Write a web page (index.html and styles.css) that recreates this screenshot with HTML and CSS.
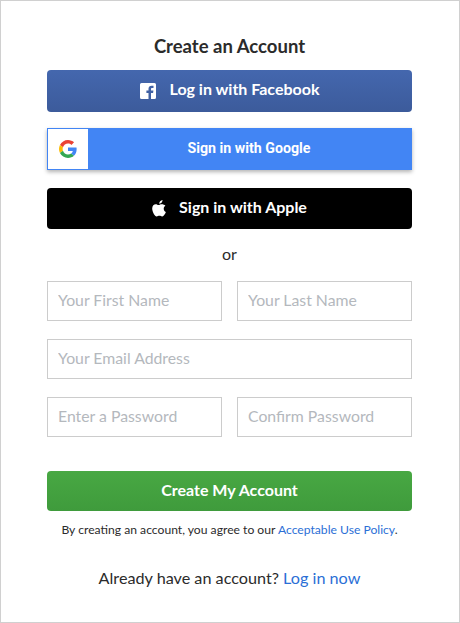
FILE: index.html
```html
<!DOCTYPE html>
<html>
  <head>
    <title>Create an Account</title>
    <link rel="stylesheet" href="styles.css">
  </head>
  <body>
    <div class="panel">
      <h1 class="title">Create an Account</h1>

      <button class="socialButton facebookButton">
        <svg class="facebookIcon" viewBox="0 0 16 16" width="16" height="16">
          <path fill="#fff" d="M1.5 0h13A1.5 1.5 0 0 1 16 1.5v13a1.5 1.5 0 0 1-1.500 1.500H11V10h2.100l.3-2.400H11V6.100c0-.7.2-1.100 1.200-1.100h1.300V2.800c-.3 0-1-.1-1.900-.1-1.900 0-3.100 1.100-3.100 3.200v1.700H6.400V10h2.100v6h-7A1.500 1.500 0 0 1 0 14.500v-13A1.500 1.500 0 0 1 1.500 0z"/>
        </svg>
        Log in with Facebook
      </button>

      <button class="googleButton">
        <span class="googleIconBox">
          <svg viewBox="0 0 48 48" width="18" height="18">
            <path fill="#EA4335" d="M24 9.500c3.500 0 6.700 1.200 9.200 3.600l6.900-6.900C35.900 2.400 30.500 0 24 0 14.600 0 6.500 5.400 2.600 13.200l8 6.200C12.500 13.700 17.800 9.500 24 9.500z"/>
            <path fill="#4285F4" d="M47 24.500c0-1.600-.1-3.100-.4-4.500H24v9h12.900c-.6 3-2.200 5.500-4.700 7.200l7.700 6C44.400 38 47 31.900 47 24.500z"/>
            <path fill="#FBBC05" d="M10.500 28.600c-.5-1.400-.8-3-.8-4.600s.3-3.200.8-4.600l-8-6.200C1 16.500 0 20.100 0 24s1 7.500 2.600 10.800l7.900-6.200z"/>
            <path fill="#34A853" d="M24 48c6.500 0 11.900-2.100 15.900-5.800l-7.700-6c-2.200 1.500-4.900 2.300-8.200 2.300-6.200 0-11.500-4.200-13.400-9.900l-8 6.200C6.500 42.600 14.600 48 24 48z"/>
          </svg>
        </span>
        <span class="googleLabel">Sign in with Google</span>
      </button>

      <button class="socialButton appleButton">
        <svg class="appleIcon" viewBox="0 0 16 18" width="15" height="17">
          <path fill="#fff" d="M11.200 0c.1 1-.3 2-.9 2.700-.6.800-1.600 1.300-2.500 1.200-.1-1 .4-2 .9-2.600C9.300.6 10.400.1 11.200 0zM14.300 6.100c-1.100.7-1.800 1.800-1.800 3.100 0 1.500.9 2.800 2.300 3.400-.3.900-.7 1.700-1.200 2.500-.8 1.100-1.600 2.300-2.800 2.300s-1.500-.7-2.900-.7-1.800.7-2.900.7c-1.200 0-2.100-1.200-2.900-2.400C1 13.100.2 10.800.2 9.100c0-3 1.900-4.600 3.800-4.600 1.200 0 2.200.8 3 .8.700 0 1.800-.8 3.200-.8 1.700 0 3.100.6 4.100 1.600z"/>
        </svg>
        Sign in with Apple
      </button>

      <p class="orText">or</p>

      <div class="fieldRow">
        <input class="textBox" placeholder="Your First Name">
        <input class="textBox" placeholder="Your Last Name">
      </div>
      <div class="fieldRow">
        <input class="textBox" placeholder="Your Email Address">
      </div>
      <div class="fieldRow">
        <input class="textBox" placeholder="Enter a Password">
        <input class="textBox" placeholder="Confirm Password">
      </div>

      <button class="createButton">Create My Account</button>

      <p class="policyText">By creating an account, you agree to our <a href="#">Acceptable Use Policy</a>.</p>

      <p class="loginText">Already have an account? <a href="#">Log in now</a></p>
    </div>
  </body>
</html>
```

FILE: styles.css
```css
html, body{
  margin: 0;
  height: 100%;
}

body{
  font-family: Lato, "Open Sans", Arial, sans-serif;
  color: #2b2b2b;
  background-color: white;
}

.panel{
  box-sizing: border-box;
  width: 460px;
  height: 623px;
  padding: 35px 47px 0 46px;
  border: 1px solid #d0d0d0;
}

.title{
  margin: 0 0 14px 0;
  font-size: 18.5px;
  line-height: 20px;
  font-weight: bold;
  text-align: center;
  color: #2b2b2b;
}

button{
  display: flex;
  align-items: center;
  justify-content: center;
  width: 100%;
  border: none;
  padding: 0;
  color: white;
  font-family: inherit;
  font-size: 16px;
  font-weight: bold;
  cursor: pointer;
}

.socialButton{
  border-radius: 4px;
}

.facebookButton{
  height: 42px;
  margin-bottom: 16px;
  padding-bottom: 6px;
  background: linear-gradient(#4467ae, #3c5b9b);
}

.facebookIcon{
  margin-top: 6px;
  margin-right: 14px;
}

.googleButton{
  height: 42px;
  margin-bottom: 18px;
  background-color: #4285f4;
  box-shadow: 0 2px 4px rgba(0, 0, 0, 0.3);
}

.googleIconBox{
  display: flex;
  align-items: center;
  justify-content: center;
  box-sizing: border-box;
  width: 40px;
  height: 40px;
  margin-left: 1px;
  background-color: white;
}

.googleLabel{
  flex: 1;
  padding-right: 2px;
  padding-bottom: 2px;
  font-family: Roboto, Arial, sans-serif;
  font-size: 14.2px;
  font-weight: bold;
  text-align: center;
}

.appleButton{
  height: 41px;
  padding-bottom: 4px;
  background-color: black;
}

.appleIcon{
  margin-top: 4px;
  margin-right: 12px;
}

.orText{
  margin: 15px 0 17px 0;
  font-size: 16px;
  line-height: 20px;
  text-align: center;
}

.fieldRow{
  display: flex;
  gap: 15px;
  margin-bottom: 18px;
}

.textBox{
  flex: 1;
  min-width: 0;
  box-sizing: border-box;
  height: 40px;
  padding: 0 10px 4px 10px;
  border: 1px solid #cccccc;
  font-family: inherit;
  font-size: 15.8px;
}

.textBox::placeholder{
  color: #b4b8bd;
  opacity: 1;
}

.createButton{
  height: 40px;
  margin-top: 34px;
  padding-bottom: 4px;
  border-radius: 4px;
  background: linear-gradient(#48a843, #3f9b3c);
}

.policyText{
  margin: 11px 0 0 0;
  font-size: 12.15px;
  line-height: 16px;
  text-align: center;
}

a{
  color: #2b6fd6;
  text-decoration: none;
}

.loginText{
  margin: 30px 0 0 0;
  font-size: 16.2px;
  line-height: 20px;
  text-align: center;
}
```
